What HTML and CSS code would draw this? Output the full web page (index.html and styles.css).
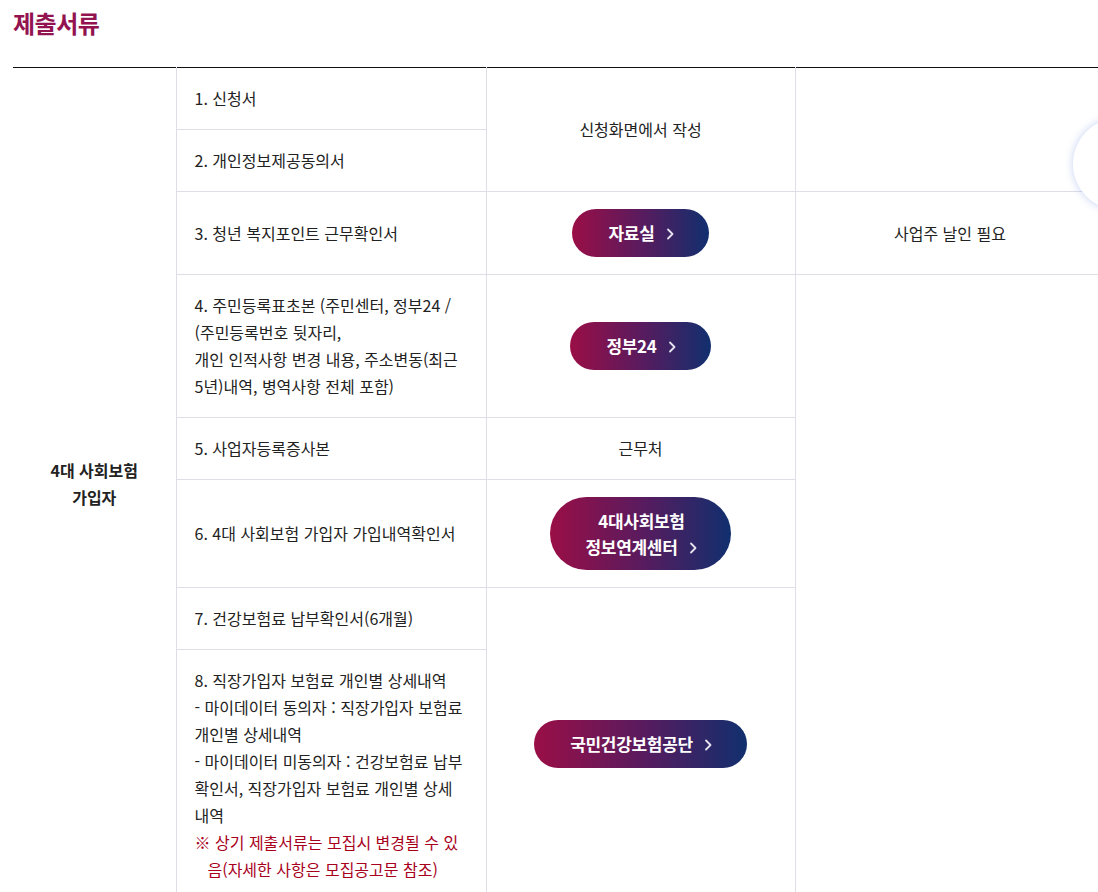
FILE: index.html
```html
<!DOCTYPE html>
<html lang="ko">
<head>
<meta charset="utf-8">
<title>제출서류</title>
<link rel="stylesheet" href="styles.css">
</head>
<body>
<div class="page">
  <h2 class="title">제출서류</h2>
  <div class="table-wrap">
    <table class="docs">
      <colgroup>
        <col class="c1"><col class="c2"><col class="c3"><col class="c4">
      </colgroup>
      <tbody>
        <tr>
          <th rowspan="8" class="group">4대 사회보험<br>가입자</th>
          <td class="item">1. 신청서</td>
          <td rowspan="2" class="center">신청화면에서 작성</td>
          <td rowspan="2" class="center"></td>
        </tr>
        <tr>
          <td class="item">2. 개인정보제공동의서</td>
        </tr>
        <tr>
          <td class="item">3. 청년 복지포인트 근무확인서</td>
          <td class="center"><a class="btn" href="#">자료실<svg class="chev" viewBox="0 0 10 14"><polyline points="3,2.5 7.5,7 3,11.5"/></svg></a></td>
          <td class="center">사업주 날인 필요</td>
        </tr>
        <tr>
          <td class="item">4. 주민등록표초본 (주민센터, 정부24 /<br>(주민등록번호 뒷자리,<br>개인 인적사항 변경 내용, 주소변동(최근<br>5년)내역, 병역사항 전체 포함)</td>
          <td class="center"><a class="btn" href="#">정부24<svg class="chev" viewBox="0 0 10 14"><polyline points="3,2.5 7.5,7 3,11.5"/></svg></a></td>
          <td rowspan="5" class="center"></td>
        </tr>
        <tr>
          <td class="item">5. 사업자등록증사본</td>
          <td class="center">근무처</td>
        </tr>
        <tr>
          <td class="item">6. 4대 사회보험 가입자 가입내역확인서</td>
          <td class="center"><a class="btn two" href="#">4대사회보험<br>정보연계센터<svg class="chev" viewBox="0 0 10 14"><polyline points="3,2.5 7.5,7 3,11.5"/></svg></a></td>
        </tr>
        <tr>
          <td class="item">7. 건강보험료 납부확인서(6개월)</td>
          <td rowspan="2" class="center"><a class="btn" href="#">국민건강보험공단<svg class="chev" viewBox="0 0 10 14"><polyline points="3,2.5 7.5,7 3,11.5"/></svg></a></td>
        </tr>
        <tr>
          <td class="item">8. 직장가입자 보험료 개인별 상세내역<br>- 마이데이터 동의자 : 직장가입자 보험료<br>개인별 상세내역<br>- 마이데이터 미동의자 : 건강보험료 납부<br>확인서, 직장가입자 보험료 개인별 상세<br>내역
            <p class="note">※ 상기 제출서류는 모집시 변경될 수 있<br>음(자세한 사항은 모집공고문 참조)</p>
          </td>
        </tr>
      </tbody>
    </table>
  </div>
</div>
<button class="float-btn" type="button" aria-label="메뉴"></button>
</body>
</html>
```

FILE: styles.css
```css
html, body {
  margin: 0;
  padding: 0;
  background: #fff;
  overflow: hidden;
}
body {
  font-family: "Noto Sans CJK KR", "Noto Sans", sans-serif;
  color: #222;
  font-size: 16px;
}
.page {
  padding: 6px 0 0 13px;
}
.title {
  margin: 0 0 27px 0;
  font-size: 24px;
  line-height: 34px;
  font-weight: 700;
  color: #921350;
  letter-spacing: -0.5px;
}
.table-wrap {
  width: 1092px;
}
.docs {
  width: 1092px;
  border-collapse: collapse;
  table-layout: fixed;
  border-top: 1px solid #111;
}
.c1 { width: 163px; }
.c2 { width: 310px; }
.c3 { width: 309px; }
.c4 { width: 310px; }
.docs th, .docs td {
  border: 1px solid #dedde8;
  padding: 17px 18px;
  line-height: 27px;
  font-size: 16px;
  letter-spacing: 0;
  vertical-align: middle;
}
.docs tr:first-child th, .docs tr:first-child td {
  border-top: 1px solid #111;
}
.docs th.group {
  border-left: none;
  font-weight: 700;
  text-align: center;
  color: #222;
}
.docs td.item {
  text-align: left;
  color: #222;
}
.docs td.center {
  text-align: center;
}
.note {
  margin: 0;
  padding-left: 13px;
  text-indent: -13px;
  color: #a8001c;
}
.btn {
  display: inline-block;
  height: 48px;
  padding: 12px 34px 12px 36px;
  box-sizing: border-box;
  border-radius: 24px;
  background: linear-gradient(90deg, #9a0e46 0%, #5a1b5e 50%, #112f6e 100%);
  color: #fff;
  font-weight: 700;
  font-size: 17px;
  line-height: 24px;
  text-decoration: none;
  letter-spacing: -0.3px;
  white-space: nowrap;
}
.btn.two {
  height: 73px;
  border-radius: 37px;
  padding: 11px 33px 11px 35px;
  line-height: 26px;
}
.chev {
  display: inline-block;
  width: 10px;
  height: 14px;
  margin-left: 10px;
  vertical-align: -1px;
  fill: none;
  stroke: #e6e3ee;
  stroke-width: 1.8;
  stroke-linecap: round;
  stroke-linejoin: round;
}
.float-btn {
  position: fixed;
  left: 1073px;
  top: 118px;
  width: 92px;
  height: 92px;
  border-radius: 50%;
  border: none;
  background: #fff;
  box-shadow: 0 0 9px rgba(110, 140, 220, 0.4);
  padding: 0;
}
```
